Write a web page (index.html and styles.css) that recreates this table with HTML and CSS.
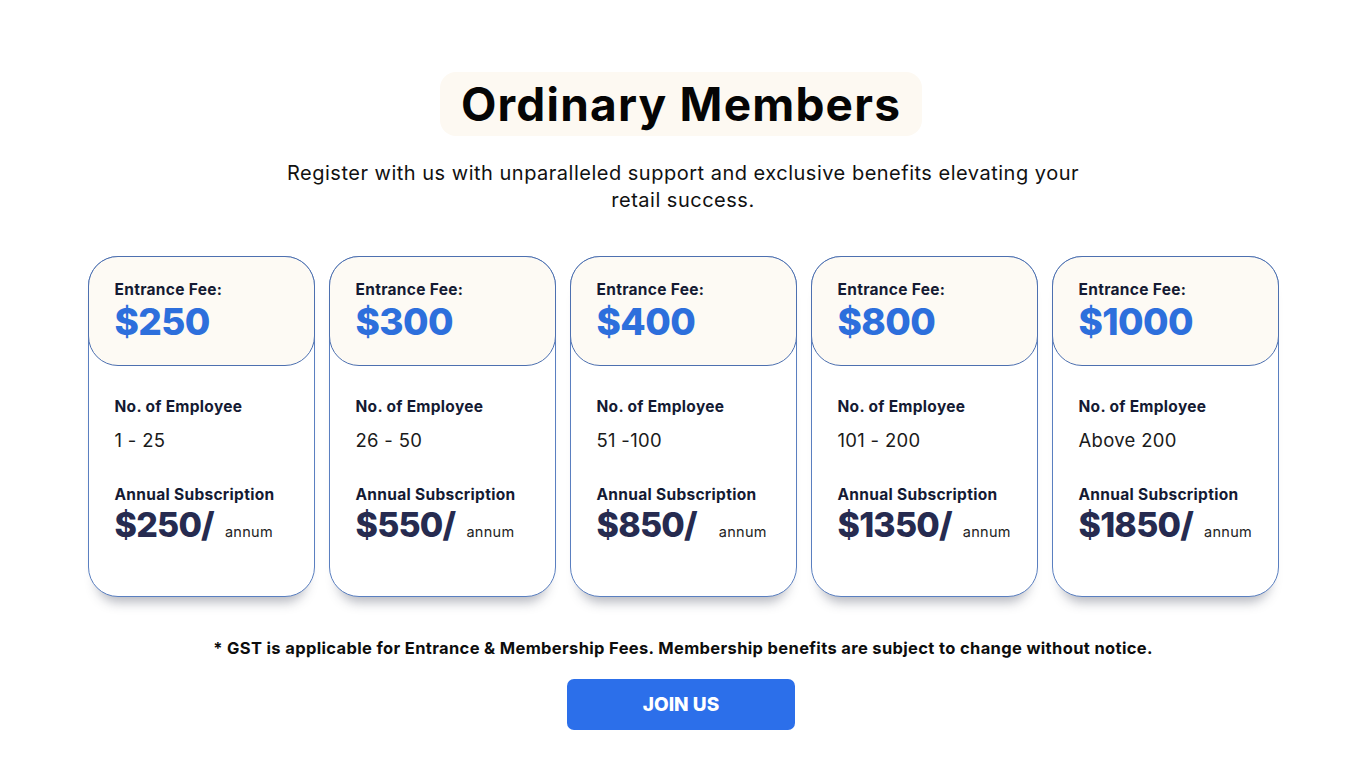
FILE: index.html
```html
<!DOCTYPE html>
<html lang="en">
<head>
<meta charset="utf-8">
<title>Ordinary Members</title>
<link rel="stylesheet" href="styles.css">
</head>
<body>
<main class="page">
  <h1 class="title">Ordinary Members</h1>
  <p class="subtitle">Register with us with unparalleled support and exclusive benefits elevating your<br>retail success.</p>
  <div class="cards">
    <div class="card">
      <div class="card-head"><div class="label">Entrance Fee:</div><div class="fee">$250</div></div>
      <div class="card-body">
        <div class="label">No. of Employee</div>
        <div class="range">1 - 25</div>
        <div class="label">Annual Subscription</div>
        <div class="sub"><span class="amount">$250/</span><span class="annum">annum</span></div>
      </div>
    </div>
    <div class="card">
      <div class="card-head"><div class="label">Entrance Fee:</div><div class="fee">$300</div></div>
      <div class="card-body">
        <div class="label">No. of Employee</div>
        <div class="range">26 - 50</div>
        <div class="label">Annual Subscription</div>
        <div class="sub"><span class="amount">$550/</span><span class="annum">annum</span></div>
      </div>
    </div>
    <div class="card">
      <div class="card-head"><div class="label">Entrance Fee:</div><div class="fee">$400</div></div>
      <div class="card-body">
        <div class="label">No. of Employee</div>
        <div class="range">51 -100</div>
        <div class="label">Annual Subscription</div>
        <div class="sub"><span class="amount">$850/</span><span class="annum wide">annum</span></div>
      </div>
    </div>
    <div class="card">
      <div class="card-head"><div class="label">Entrance Fee:</div><div class="fee">$800</div></div>
      <div class="card-body">
        <div class="label">No. of Employee</div>
        <div class="range">101 - 200</div>
        <div class="label">Annual Subscription</div>
        <div class="sub"><span class="amount">$1350/</span><span class="annum">annum</span></div>
      </div>
    </div>
    <div class="card">
      <div class="card-head"><div class="label">Entrance Fee:</div><div class="fee">$1000</div></div>
      <div class="card-body">
        <div class="label">No. of Employee</div>
        <div class="range">Above 200</div>
        <div class="label">Annual Subscription</div>
        <div class="sub"><span class="amount">$1850/</span><span class="annum">annum</span></div>
      </div>
    </div>
  </div>
  <p class="note">* GST is applicable for Entrance &amp; Membership Fees. Membership benefits are subject to change without notice.</p>
  <a class="join" href="#">JOIN US</a>
</main>
</body>
</html>
```
FILE: styles.css
```css
* { box-sizing: border-box; }
html, body { margin: 0; padding: 0; background: #ffffff; }
body { font-family: "Inter", "Liberation Sans", sans-serif; color: #0b0b0b; }
.page {
  width: 1366px;
  height: 768px;
  display: flex;
  flex-direction: column;
  align-items: center;
  padding-top: 72px;
}
.title {
  margin: 0 4px 0 0;
  background: #fdf9f2;
  border-radius: 16px;
  height: 64px;
  width: 482px;
  display: flex;
  align-items: center;
  justify-content: center;
  font-size: 46px;
  font-weight: 700;
  letter-spacing: 1.2px;
  color: #050505;
  white-space: nowrap;
}
.subtitle {
  margin: 24px 0 0;
  text-align: center;
  font-size: 20px;
  line-height: 27px;
  color: #111;
  font-weight: 400;
  letter-spacing: 0.5px;
}
.cards {
  margin-top: 42px;
  display: flex;
  gap: 14px;
}
.card {
  width: 227px;
  height: 341px;
  border: 1px solid #5a7fc0;
  border-radius: 30px;
  background: #fff;
  box-shadow: 0 14px 12px -9px rgba(40, 45, 70, 0.35);
}
.card-head {
  margin: -1px -1px 0;
  height: 110px;
  background: #fdfaf4;
  border: 1px solid #4d70b0;
  border-radius: 30px;
  padding: 24px 26px 0;
}
.label {
  font-size: 15.5px;
  font-weight: 700;
  color: #141a33;
  line-height: 18px;
  letter-spacing: 0.3px;
  white-space: nowrap;
}
.fee {
  font-size: 37px;
  font-weight: 800;
  color: #2d6fdc;
  letter-spacing: -0.6px;
  line-height: 46px;
}
.card-body {
  padding: 32px 26px 0;
}
.range {
  font-size: 18.5px;
  color: #1a1a1a;
  margin: 13px 0 35px;
  line-height: 22px;
  letter-spacing: 0.3px;
}
.sub {
  display: flex;
  align-items: baseline;
  margin-top: 1px;
}
.amount {
  font-size: 34px;
  font-weight: 800;
  color: #262b50;
  letter-spacing: -0.8px;
  line-height: 40px;
}
.annum {
  font-size: 14.5px;
  color: #222;
  margin-left: 11px;
  letter-spacing: 0.3px;
}
.annum.wide { margin-left: 22px; }
.note {
  margin: 41px 0 0;
  font-size: 16.5px;
  font-weight: 700;
  color: #0d0d0d;
  letter-spacing: 0.35px;
  white-space: nowrap;
}
.join {
  margin: 21px 4px 0 0;
  width: 228px;
  height: 51px;
  border-radius: 7px;
  background: #2c6fea;
  color: #fff;
  font-size: 19px;
  font-weight: 800;
  text-decoration: none;
  display: flex;
  align-items: center;
  justify-content: center;
  letter-spacing: 0;
}
```
